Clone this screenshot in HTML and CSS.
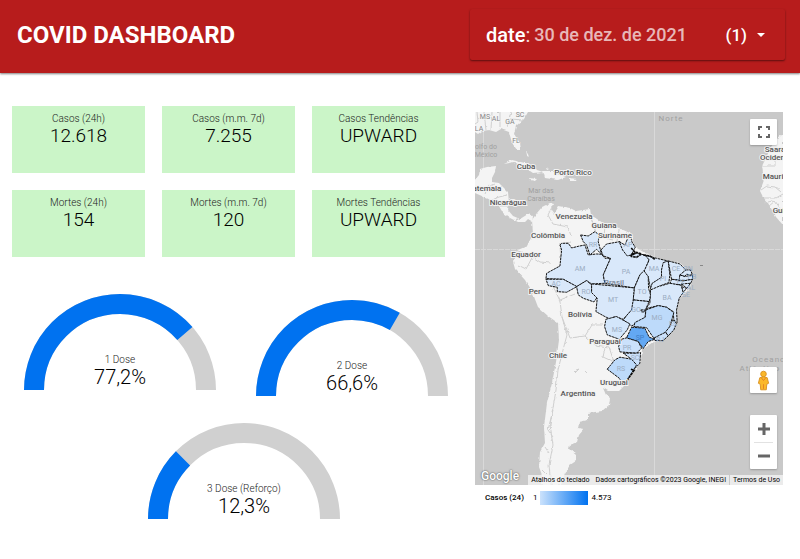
FILE: index.html
```html
<!DOCTYPE html>
<html lang="pt-BR">
<head>
<meta charset="utf-8">
<meta name="viewport" content="width=device-width, initial-scale=1">
<title>COVID DASHBOARD</title>
<link rel="stylesheet" href="styles.css">
</head>
<body>
<header class="topbar">
  <h1>COVID DASHBOARD</h1>
  <button class="filter" type="button">
    <span class="filter-name">date<span class="colon">:</span></span> <span class="filter-value">30 de dez. de 2021</span>
    <span class="filter-count">(1)</span>
    <svg class="caret" viewBox="0 0 8 4" aria-hidden="true"><path d="M0 0h8L4 4z"/></svg>
  </button>
</header>
<main class="board">
  <div class="left">
    <section class="cards">
      <article class="card"><h2>Casos (24h)</h2><p>12.618</p></article>
      <article class="card"><h2>Casos (m.m. 7d)</h2><p>7.255</p></article>
      <article class="card"><h2>Casos Tendências</h2><p>UPWARD</p></article>
      <article class="card"><h2>Mortes (24h)</h2><p>154</p></article>
      <article class="card"><h2>Mortes (m.m. 7d)</h2><p>120</p></article>
      <article class="card"><h2>Mortes Tendências</h2><p>UPWARD</p></article>
    </section>
    <section class="gauges">
      <article class="gauge">
        <svg viewBox="0 0 192 96" aria-hidden="true"><path class="track" d="M10 96a86 86 0 0 1 172 0"/><path class="fill" pathLength="1000" stroke-dasharray="772 2000" d="M10 96a86 86 0 0 1 172 0"/></svg>
        <div class="reading"><h2>1 Dose</h2><p>77,2%</p></div>
      </article>
      <article class="gauge">
        <svg viewBox="0 0 192 96" aria-hidden="true"><path class="track" d="M10 96a86 86 0 0 1 172 0"/><path class="fill" pathLength="1000" stroke-dasharray="666 2000" d="M10 96a86 86 0 0 1 172 0"/></svg>
        <div class="reading"><h2>2 Dose</h2><p>66,6%</p></div>
      </article>
      <article class="gauge">
        <svg viewBox="0 0 192 96" aria-hidden="true"><path class="track" d="M10 96a86 86 0 0 1 172 0"/><path class="fill" pathLength="1000" stroke-dasharray="249 2000" d="M10 96a86 86 0 0 1 172 0"/></svg>
        <div class="reading"><h2>3 Dose (Reforço)</h2><p>12,3%</p></div>
      </article>
    </section>
  </div>
  <section class="geo">
    <div class="map">
      <svg class="map-art" viewBox="475 112 308 373" role="img" aria-label="Casos (24)">
        <defs>
          <filter id="coast" x="-5%" y="-5%" width="110%" height="110%"><feTurbulence type="fractalNoise" baseFrequency=".22" numOctaves="2" seed="4"/><feDisplacementMap in="SourceGraphic" scale="3" xChannelSelector="R" yChannelSelector="G"/></filter>
        </defs>
        <!-- graticule -->
        <path class="grid" d="M483.500 112V485M654.500 112V485"/>
        <path class="equator" d="M475 249.500H783"/>
        <g class="land" filter="url(#coast)">
          <!-- North America and Florida -->
          <path d="M475 112H528L524 119 516 126 514 134 520 143 521 150 517 150 512 143 509 132 501 129 496 132 489 130 482 131 478 134 475 132Z"/>
          <!-- Central America -->
          <path d="M475 180L479 175 480 169 487 167 496 166 495 172 492 178 492 182 499 183 508 192 509 203 508 210 513 216 520 219 528 214 533 216 532 222 527 219 524 222 518 222 510 218 503 213 499 206 493 201 484 197 475 193Z"/>
          <!-- islands -->
          <path d="M504 164L512 160 525 163 534 169 543 172 533 173 524 167 514 162ZM543 171L552 171 557 174 566 177 558 180 545 178ZM529 178L537 179 535 181 530 180ZM570 178L577 179 576 181 570 181ZM526 151L529 156 527 155ZM546 167L549 168 547 169Z"/>
          <!-- South America -->
          <path d="M532 220L537 213 542 207 550 203 554 204 551 210 554 214 559 206 570 208 576 211 590 209 591 215 603 223 619 228 630 233 635 247 645 253 657 258 665 261 680 263 690 272 692 279 690 288 680 298 677 306 676 320 668 335 661 341 653 342 642 350 641 361 635 371 624 386 619 391 608 391 603 388 606 395 610 398 609 405 602 411 588 413 588 420 579 422 578 428 584 429 579 435 577 442 570 445 569 449 576 455 576 461 570 465 565 473 561 485H541L542 475 539 467 540 452 545 443 544 427 547 403 552 383 556 362 559 340 558 323 548 316 538 307 533 294 525 280 515 269 513 262 518 250 527 246 533 234Z"/>
          <!-- West Africa -->
          <path d="M783 134L777 139 771 147 765 160 762 166 764 180 760 191 763 197 768 203 776 217 783 225Z"/>
        </g>
        <g class="borders" filter="url(#coast)">
          <path d="M484 112L486 130M492 112L491 129M500 112V127M511 112L507 127M511 119L523 120M477 112L478 122 475 124M485 194L488 187 495 184M492 200L499 197 507 195M500 206H508M516 218L517 221"/>
          <path d="M553 205L548 215 553 224 568 227 571 236M571 242L560 244 561 265 551 274M518 251L530 255 540 262 551 263M518 265L526 269 533 256M546 275L555 290 560 301 562 317 567 335 564 346 558 370 556 390 554 402 550 425 553 445 549 465 551 485M560 300L575 294M562 317L570 338 585 336 592 325 603 325M585 336L595 345 609 347 614 362 603 357 605 348M606 381L617 386M590 216L596 232M605 225L604 238 613 240M619 229L617 241"/>
          <path d="M762 166H775V158H783M761 190L767 186 775 187 781 192M764 198H776L783 194M764 203L772 201M769 206L775 201 780 208"/>
          <path d="M575 373L579 369 576 370M585 371L588 374M553 410L548 430 553 437M545 447L549 453M542 470L547 475"/>
        </g>
        <path class="isle" d="M700 265.500H703"/>
        <!-- Brazilian states -->
        <g transform="translate(520 220) scale(.333)">
          <g class="states" filter="url(#coast)">
            <path d="M120 75L125 70 145 70 155 84 175 79 195 75 205 105 230 102 245 103 255 115 272 115 250 165 255 190 215 192 200 182 170 200 130 178 78 176 80 160 120 138 125 90Z"/>
            <path d="M182 45L205 48 225 35 238 45 235 65 245 103 230 88 210 105 200 75 190 65Z"/>
            <path d="M243 90L260 72 300 65 310 82 325 95 335 105 350 100 375 105 388 118 375 152 360 165 343 204 255 190 250 165 272 115 250 108Z"/>
            <path d="M298 65L315 75 330 40 336 65 346 82 334 105 322 108 308 90Z"/>
            <path d="M375 105L410 115 440 122 425 150 425 174 398 190 392 208 385 170 372 155 388 120Z"/>
            <path d="M430 128L445 123 450 165 447 188 415 200 400 215 392 205 397 190 425 172 425 150Z"/>
            <path d="M445 123L480 132 498 150 478 180 455 178 450 150Z"/>
            <path d="M498 150L512 150 518 165 500 163 495 169 480 165Z"/>
            <path d="M480 165L495 170 518 165 518 178 490 183 478 180Z"/>
            <path d="M455 178L490 183 518 178 512 191 490 195 450 192Z"/>
            <path d="M485 192L512 190 501 205ZM485 200L500 205 490 218Z"/>
            <path d="M392 210L415 200 450 190 484 196 490 218 478 235 470 270 472 308 462 300 460 275 440 262 415 257 378 266 390 250Z"/>
            <path d="M372 152L385 170 386 205 392 225 388 245 340 240 343 205 360 165Z"/>
            <path class="s2" d="M340 240L388 245 378 266 376 290 365 304 335 318 310 300 330 274Z"/>
            <path d="M170 200L200 182 215 195 216 215 232 232 222 246 190 235 175 225Z"/>
            <path d="M215 192L343 204 340 240 335 270 310 298 285 290 270 297 255 290 228 275 232 235 215 218Z"/>
            <path d="M78 178L130 178 171 200 140 217 112 215 112 202 85 197Z"/>
            <path class="s2" d="M258 298L290 290 330 312 322 330 298 358 262 345 254 320Z"/>
            <path class="s4" d="M378 270L415 257 440 262 462 278 450 320 440 337 403 356 395 345 380 323 342 320 345 308 376 292Z"/>
            <path class="s3" d="M458 300L470 310 462 330 445 348 437 336 450 320Z"/>
            <path class="s3" d="M403 354L437 337 445 348 430 362 405 362Z"/>
            <path class="s5" d="M335 322L375 325 388 352 405 358 385 365 370 386 355 365 320 354Z"/>
            <path class="s3" d="M305 358L320 354 355 365 365 385 350 400 300 396 296 380Z"/>
            <path class="s3" d="M310 400L350 400 362 398 360 430 346 445 335 418Z"/>
            <path class="s4" d="M262 448L285 420 300 412 335 418 350 435 335 460 312 498 298 475Z"/>
            <path class="s3" d="M363 270H375V276H365Z"/>
            <path class="shore" d="M334 84L344 95 332 108 350 97 365 102 350 112 332 109M370 105L390 108 405 118M333 448L343 451 328 472 313 496"/>
          </g>
        </g>
        <g class="codes">
          <text x="485" y="119">MS</text><text x="496" y="121">AL</text><text x="510" y="124">GA</text><text x="520" y="117">SC</text><text x="479" y="131">LA</text><text x="516" y="143">FL</text>
          <g class="uf"><text x="580" y="271">AM</text><text x="593" y="247">RR</text><text x="628" y="247">AP</text><text x="626" y="274">PA</text><text x="654" y="271">MA</text><text x="676" y="271">CE</text><text x="663" y="281">PI</text><text x="642" y="294">TO</text><text x="667" y="300">BA</text><text x="586" y="294">RO</text><text x="556" y="286">AC</text><text x="613" y="302">MT</text><text x="636" y="312">GO</text><text x="657" y="320">MG</text><text x="617" y="332">MS</text><text class="dark" x="640" y="340">SP</text><text x="627" y="350">PR</text><text x="635" y="360">SC</text><text x="621" y="371">RS</text><text x="673" y="326">ES</text><text x="660" y="342">RJ</text><text x="688" y="271">RN</text><text x="692" y="279">PB</text><text x="681" y="284">PE</text><text x="691" y="290">AL</text><text x="686" y="297">SE</text></g>
        </g>
        <g class="sea"><text x="486" y="149">olfo do</text><text x="486" y="157">México</text><text x="541" y="193">Mar das</text><text x="541" y="201">Caraíbas</text></g>
        <g class="ocean"><text x="671" y="121">Norte</text><text x="769" y="362">Oceano</text><text x="760" y="371">Atlântico</text></g>
        <g class="places">
          <text x="526" y="169">Cuba</text><text x="573" y="175">Porto Rico</text><text x="482" y="191">Guatemala</text><text x="508" y="205">Nicarágua</text><text x="574" y="219">Venezuela</text><text x="604" y="228">Guiana</text><text x="615" y="238">Suriname</text><text x="548" y="238">Colômbia</text><text x="526" y="257">Equador</text><text x="537" y="294">Peru</text><text x="580" y="317">Bolívia</text><text class="faded" x="614" y="285">Brasil</text><text x="605" y="344">Paraguai</text><text x="558" y="358">Chile</text><text x="614" y="385">Uruguai</text><text x="578" y="396">Argentina</text><text x="775" y="152">Saara</text><text x="777" y="160">Ocidental</text><text x="782" y="179">Mauritânia</text><text x="783" y="213">Guiné</text>
        </g>
      </svg>
      <span class="brand">Google</span>
      <button class="tool full" type="button" aria-label="Tela cheia"><svg viewBox="0 0 12 12"><path d="M1 4V1h3M8 1h3v3M11 8v3H8M4 11H1V8"/></svg></button>
      <button class="tool person" type="button" aria-label="Street View"><svg viewBox="0 0 14 22"><circle cx="7" cy="4" r="3"/><path d="M3 8Q7 6 11 8L12.500 14 10.500 15 10 21H4L3.500 15 1.500 14Z"/><path class="collar" d="M4.500 8L7 11 9.500 8M7 15V20"/></svg></button>
      <div class="zoomer">
        <button type="button" aria-label="Aumentar zoom"><svg viewBox="0 0 12 12"><path d="M0 6H12M6 0V12"/></svg></button>
        <button type="button" aria-label="Diminuir zoom"><svg viewBox="0 0 12 12"><path d="M0 6H12"/></svg></button>
      </div>
      <div class="credits"><button type="button">Atalhos do teclado</button><span>Dados cartográficos ©2023 Google, INEGI</span><a href="#termos">Termos de Uso</a></div>
    </div>
    <div class="legend"><span class="legend-name">Casos (24)</span><span>1</span><i class="ramp"></i><span>4.573</span></div>
  </section>
</main>
</body>
</html>
```
FILE: styles.css
```css
* { box-sizing: border-box; }
body { margin: 0; background: #fff; color: #000; font-family: Roboto, "Liberation Sans", sans-serif; }
h1, h2, p { margin: 0; font-weight: 400; }
button { font: inherit; border: 0; padding: 0; cursor: pointer; }

.topbar { display: flex; align-items: center; justify-content: space-between; padding: 9px 15px 13px 17px; background: #b71c1c; box-shadow: 0 1px 2px rgba(0,0,0,.5); }
.topbar h1 { color: #fff; font-size: 24px; line-height: 28px; font-weight: 700; }
.filter { display: flex; align-items: center; width: 40%; min-width: 315px; height: 51px; padding: 0 20px 0 16px; background: #b71c1c; color: #fff; border-radius: 2px; box-shadow: 0 1px 2px rgba(0,0,0,.5); white-space: nowrap; }
.filter-name { margin-right: 4px; font-size: 20px; font-weight: 500; }
.colon { font-weight: 400; color: rgba(255,255,255,.85); }
.filter-value { font-size: 18px; font-weight: 500; color: rgba(255,255,255,.7); }
.filter-count { margin-left: auto; font-size: 17px; font-weight: 500; }
.caret { width: 8px; height: 4px; margin-left: 10px; fill: #fff; }

.board { display: grid; grid-template-columns: 436fr 308fr; gap: 27px; padding: 33px 17px 0 12px; }
.cards { display: grid; grid-template-columns: repeat(3, 1fr); gap: 17px; padding-right: 3px; }
.card { height: 67px; padding-top: 7px; background: #cbf5c8; text-align: center; }
.card h2, .reading h2 { font-size: 10px; line-height: 12px; font-weight: 300; color: #222; }
.card p, .reading p { font-size: 20px; line-height: 22px; font-weight: 300; color: #000; }
.card p { font-size: 19px; }

.gauges { display: flex; flex-wrap: wrap; justify-content: center; gap: 27px 40px; padding: 37px 0 0 12px; }
.gauge { display: grid; width: 192px; height: 102px; align-content: start; }
.gauge:nth-child(even) { align-content: end; }
.gauge:last-child { margin-left: 16px; }
.gauge svg, .reading { grid-area: 1 / 1; }
.gauge svg { display: block; width: 100%; fill: none; stroke-width: 20; }
.track { stroke: #d0d0d0; }
.fill { stroke: #0072f0; }
.reading { align-self: end; text-align: center; padding-bottom: 2px; }

.geo { padding-top: 6px; }
.map { position: relative; overflow: hidden; background: #c9c9c9; }
.map-art { display: block; width: 100%; }
.grid, .equator { fill: none; stroke: #d9d9d9; }
.equator { stroke-dasharray: 5 1; }
.isle { stroke: #888; }
.land { fill: #f4f4f4; }
.borders { fill: none; stroke: #cfcfcf; stroke-width: 1; }
.states { fill: #d9e8fa; stroke: #111; stroke-width: 3; stroke-dasharray: 8 2; }
.s2 { fill: #d3e6fb; }
.s3 { fill: #cbe1fb; }
.s4 { fill: #bddafa; }
.s5 { fill: #64a8f3; }
.shore { fill: none; stroke-width: 5; }
.map-art text { text-anchor: middle; font-family: Roboto, sans-serif; }
.codes { font-size: 7px; fill: #858585; stroke: #f6f6f6; stroke-width: 1; paint-order: stroke; }
.uf { fill: #9cadc2; stroke: none; }
.uf .dark { fill: #3f7dc4; }
.sea { font-size: 7px; fill: #a0a0a0; }
.ocean { font-size: 8px; fill: #a0a0a0; letter-spacing: 1px; }
.places { font-size: 8px; font-weight: 500; fill: #555; stroke: #f2f2f2; stroke-width: 2; paint-order: stroke; }
.places .faded { fill: #7e8a99; stroke: none; }

.brand { position: absolute; left: 6px; bottom: 1px; font: 500 12px/16px Roboto, sans-serif; color: #fff; text-shadow: 0 0 1px #555, 0 0 2px #666; }
.tool { position: absolute; right: 6px; display: grid; place-items: center; width: 27px; height: 26px; background: #fff; border-radius: 1px; box-shadow: 0 1px 2px rgba(0,0,0,.25); }
.full { top: 7px; }
.full svg { width: 12px; fill: none; stroke: #666; stroke-width: 2; }
.person { bottom: 92px; }
.person svg { width: 13px; height: 21px; fill: #fbb829; stroke: #d99222; stroke-width: 1; }
.person .collar { fill: none; stroke: #e37f24; }
.zoomer { position: absolute; right: 6px; bottom: 16px; width: 27px; background: #fff; border-radius: 1px; box-shadow: 0 1px 2px rgba(0,0,0,.25); }
.zoomer button { display: grid; place-items: center; width: 19px; height: 27px; margin: 0 4px; background: none; }
.zoomer button + button { border-top: 1px solid #e2e2e2; }
.zoomer svg { width: 12px; fill: none; stroke: #666; stroke-width: 3; }
.credits { position: absolute; right: 0; bottom: 0; display: flex; height: 10px; font-size: 7px; line-height: 10px; white-space: nowrap; }
.credits > * { padding: 0 3px; background: rgba(245,245,245,.75); color: #000; text-decoration: none; }
.credits a { border-left: 1px solid #c9c9c9; }
.legend { display: flex; align-items: center; gap: 3px; padding: 6px 10px; font-size: 8px; line-height: 14px; }
.legend-name { font-weight: 500; margin-right: 6px; }
.ramp { width: 48px; height: 14px; background: linear-gradient(90deg, #cbe2fc, #0072f0); }
```
